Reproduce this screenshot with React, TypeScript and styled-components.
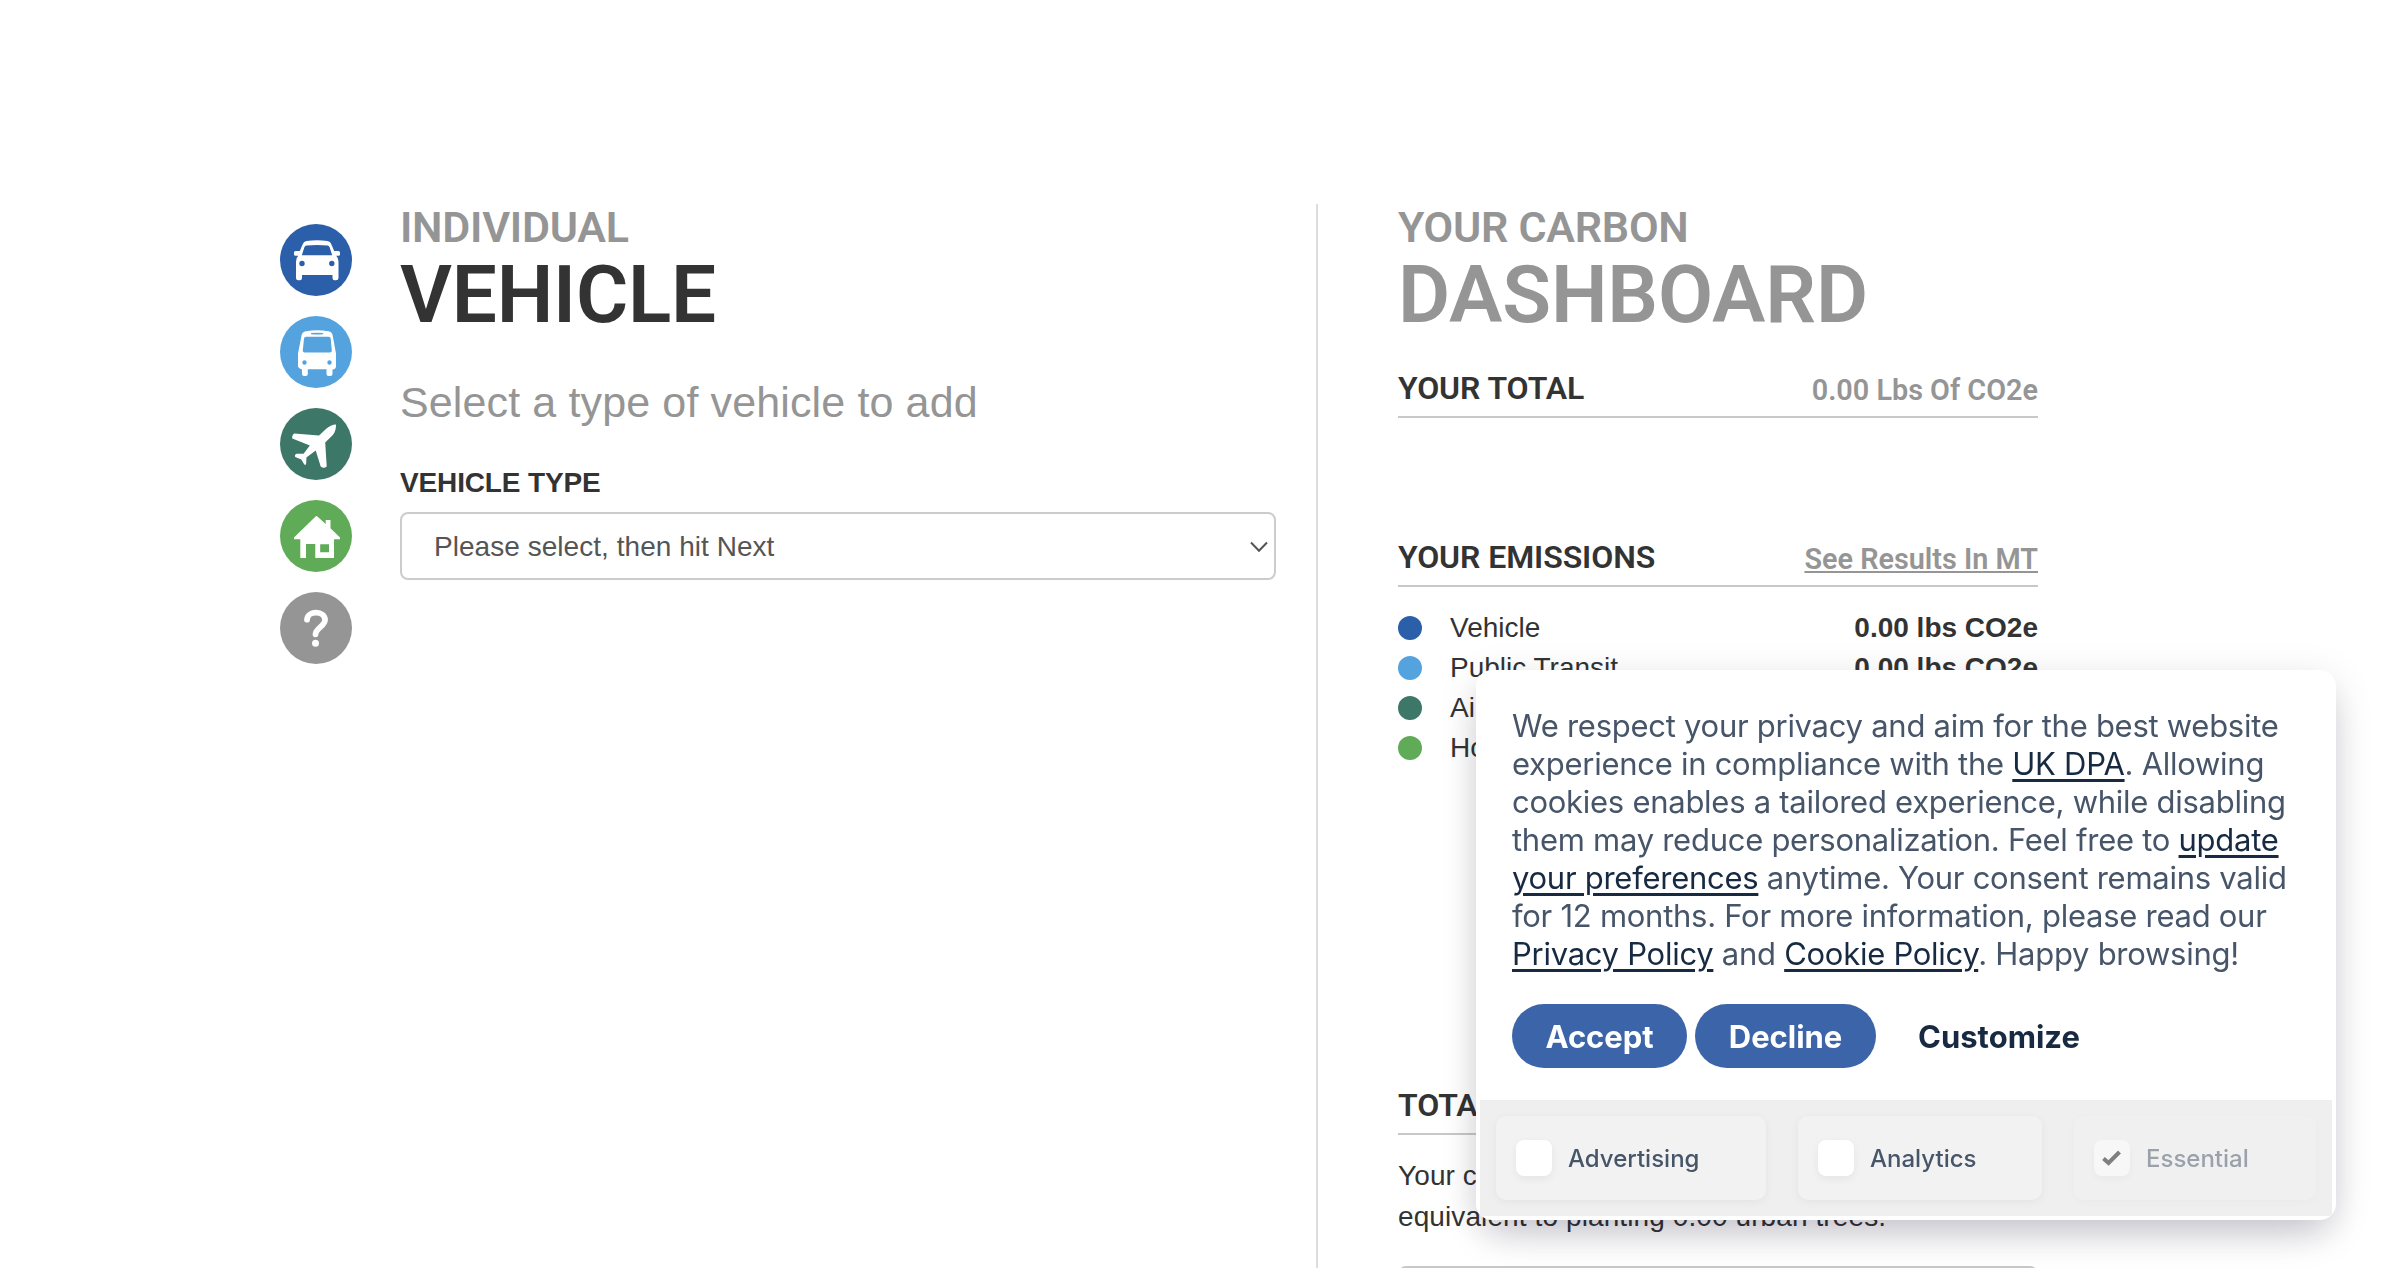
import React from "react";
import styled, { createGlobalStyle } from "styled-components";

const helvetica = `"Liberation Sans", Arial, sans-serif`;
const roboto = `Roboto, "Liberation Sans", sans-serif`;
const inter = `Inter, "Liberation Sans", sans-serif`;

const GlobalStyle = createGlobalStyle`
  * { box-sizing: border-box; }
  html, body { margin: 0; background: #fff; overflow: hidden; }
  h1, h2, h3, p, ul { margin: 0; padding: 0; }
`;

const Page = styled.div`
  display: flex;
  height: 1268px;
  padding: 204px 0 0 280px;
  overflow: hidden;
  color: #333;
  font-family: ${helvetica};
`;

const Steps = styled.nav`
  display: flex;
  flex-direction: column;
  gap: 20px;
  width: 120px;
  padding-top: 20px;
`;

const Step = styled.a<{ $color: string }>`
  display: block;
  width: 72px;
  height: 72px;
  border-radius: 50%;
  background: ${(p) => p.$color};

  svg {
    display: block;
    width: 72px;
    height: 72px;
  }
`;

const Main = styled.main`
  width: 916px;
  padding-right: 40px;
`;

const Dashboard = styled.aside`
  width: 722px;
  height: 1300px;
  padding-left: 80px;
  border-left: 2px solid #ddd;
`;

const Overline = styled.h2`
  color: #959595;
  font: 600 43px/46px ${roboto};
  letter-spacing: -0.25px;
`;

const Title = styled.h1<{ $muted?: boolean }>`
  height: 89px;
  color: ${(p) => (p.$muted ? "#959595" : "#333")};
  font: 600 80px/90px ${roboto};
  letter-spacing: -0.2px;
`;

const Prompt = styled.p`
  margin-top: 38px;
  color: #959595;
  font-size: 43px;
  line-height: 50px;
  letter-spacing: 0.13px;
`;

const FieldLabel = styled.label`
  display: block;
  margin-top: 35px;
  font-size: 28px;
  font-weight: 700;
  line-height: 41px;
  letter-spacing: -0.14px;
`;

const SelectBox = styled.div`
  display: flex;
  align-items: center;
  justify-content: space-between;
  height: 68px;
  margin-top: 9px;
  padding: 1px 6px 0 32px;
  border: 2px solid #ccc;
  border-radius: 8px;
  color: #555;
  font-size: 28px;
  letter-spacing: 0.04px;
`;

const SectionHead = styled.div<{ $top: number }>`
  display: flex;
  align-items: flex-start;
  justify-content: space-between;
  height: 50px;
  margin-top: ${(p) => p.$top}px;
  border-bottom: 2px solid #c8c8c8;
`;

const SectionTitle = styled.h3`
  font: 600 32px/40px ${roboto};
  letter-spacing: -0.08px;
`;

const SectionValue = styled.span`
  color: #959595;
  font: 600 28.8px/44px ${roboto};
`;

const SectionLink = styled(SectionValue).attrs({ as: "a" })`
  text-decoration: underline;
  text-decoration-thickness: 2px;
  text-underline-offset: 2px;
  text-decoration-skip-ink: none;
`;

const Emissions = styled.ul`
  height: 181px;
  padding-top: 21px;
  list-style: none;
`;

const Emission = styled.li`
  display: flex;
  align-items: center;
  height: 40px;
  font-size: 28px;
  line-height: 40px;

  b {
    margin-left: auto;
  }
`;

const Dot = styled.i<{ $color: string }>`
  width: 24px;
  height: 24px;
  margin-right: 28px;
  border-radius: 50%;
  background: ${(p) => p.$color};
`;

const Footprint = styled.p`
  margin-top: 20px;
  font-size: 28px;
  line-height: 41px;
  letter-spacing: 0.1px;
`;

const Card = styled.div`
  height: 120px;
  margin-top: 29px;
  border: 2px solid #c8c8c8;
  border-radius: 8px;
`;

const Consent = styled.section`
  position: fixed;
  right: 64px;
  bottom: 48px;
  width: 860px;
  height: 550px;
  padding: 37px 4px 4px;
  border-radius: 16px;
  background: #fff;
  box-shadow:
    0 20px 40px -10px rgba(20, 15, 50, 0.2),
    0 8px 40px rgba(20, 15, 50, 0.11);
  font-family: ${inter};
`;

const Notice = styled.p`
  padding-left: 32px;
  color: #475569;
  font-size: 31px;
  font-weight: 430;
  line-height: 38px;
  letter-spacing: -0.27px;
  white-space: nowrap;

  a {
    color: #172a41;
    text-decoration: underline;
    text-decoration-thickness: 3px;
    text-underline-offset: 4px;
  }
`;

const Actions = styled.div`
  display: flex;
  gap: 8px;
  margin: 31px 0 32px 32px;
`;

const Action = styled.button<{ $width: number; $plain?: boolean }>`
  width: ${(p) => p.$width}px;
  height: 64px;
  padding: 1px 0 0;
  border: 0;
  border-radius: 32px;
  background: ${(p) => (p.$plain ? "transparent" : "#3b65a8")};
  color: ${(p) => (p.$plain ? "#172a41" : "#fff")};
  font: 650 31px/63px ${inter};
  letter-spacing: ${(p) => (p.$plain ? "0" : "-0.05px")};
`;

const Categories = styled.div`
  display: flex;
  gap: 32px;
  height: 116px;
  padding: 16px;
  background: #efefef;
`;

const Category = styled.label<{ $width: number; $locked?: boolean }>`
  display: flex;
  align-items: center;
  gap: 16px;
  width: ${(p) => p.$width}px;
  height: 84px;
  padding: 0 20px;
  border-radius: 10px;
  background: #f2f2f2;
  box-shadow: 0 2px 10px rgba(0, 0, 0, 0.05);
  color: #475569;
  font-size: 24px;
  font-weight: 520;
  opacity: ${(p) => (p.$locked ? 0.5 : 1)};
`;

const Checkbox = styled.span`
  display: flex;
  align-items: center;
  justify-content: center;
  width: 36px;
  height: 36px;
  border-radius: 8px;
  background: #fff;
  box-shadow: 0 3px 8px rgba(0, 0, 0, 0.06);
`;

const CarIcon = () => (
  <svg viewBox="0 0 72 72" fill="#fff">
    <path
      fillRule="evenodd"
      d="M26.5 17Q37 15.3 47.5 17Q50.5 17.5 51.3 20.2L54.2 27H58.5Q60 27 60 28.6V30.4Q60 31.8 58.4 31.8H56.2Q58.5 34 58.5 37.5V54Q58.5 56.3 56 56.3H54.7Q52.5 56.3 52.5 54V51H22V54Q22 56.3 19.8 56.3H18.3Q16 56.3 16 54V37.5Q16 34 18.2 31.8H15.6Q14 31.8 14 30.4V28.6Q14 27 15.6 27H19.8L22.7 20.2Q23.7 17.5 26.5 17ZM26.4 21.5Q25 21.7 24.3 23.5L21.8 31.2H52.2L49.7 23.5Q49 21.7 47.5 21.5Q37 20.6 26.4 21.5ZM22 36.8A2.7 2.7 0 1 0 22 42.2A2.7 2.7 0 1 0 22 36.8ZM51.8 36.8A2.7 2.7 0 1 0 51.8 42.2A2.7 2.7 0 1 0 51.8 36.8Z"
    />
  </svg>
);

const BusIcon = () => (
  <svg viewBox="0 0 72 72" fill="#fff">
    <path
      fillRule="evenodd"
      d="M26 15.3Q37 13.2 48.5 15.3Q52.3 16 52.7 19.5L56 37.5V50Q56 53.2 52.5 53.5V58Q52.5 60 50.4 60H48.5Q46.5 60 46.5 58V53.3H27.8V58Q27.8 60 25.8 60H24Q22 60 22 58V53.5Q18 52 18 50V37.5L21.5 19.5Q22 16 26 15.3ZM26 20.7Q24.3 20.7 24 22.5L22.8 34.5Q22.7 36.6 24.7 36.6H50Q52 36.6 51.8 34.5L50.7 22.5Q50.5 20.7 48.7 20.7ZM31.4 17Q30.2 17.5 31.4 18.2Q37 18.9 42.8 18.2Q44 17.5 42.8 17Q37 16.4 31.4 17ZM24.5 44.3A2.2 2.2 0 1 0 24.5 48.7A2.2 2.2 0 1 0 24.5 44.3ZM49.5 44.3A2.2 2.2 0 1 0 49.5 48.7A2.2 2.2 0 1 0 49.5 44.3Z"
    />
  </svg>
);

const PlaneIcon = () => (
  <svg viewBox="0 0 72 72" fill="#fff">
    <path d="M56 16.4Q50.5 16.6 46.5 20.5L39 27.6L14.2 25.6Q11.6 27.5 12.3 30.4L29.8 37.6L23.6 45.8L16.6 45.8Q14.3 46.6 15.2 49L21.3 51.6L24.3 56.6Q26.2 57.5 26.2 55.3L26.4 49.6L35.7 42.5L40.7 58.6Q43.8 61.2 46.7 58.4L45.2 34.6L52.6 27.3Q56.4 22.5 56 16.4Z" />
  </svg>
);

const HouseIcon = () => (
  <svg viewBox="0 0 72 72" fill="#fff">
    <path
      fillRule="evenodd"
      d="M36.8 16L45.7 24V20H50.5V28.3L60 37.5V39.3H54V58H35.3V44H26V58H20.3V39.3H14V37.5L35.6 16.4Q36.2 15.7 36.8 16ZM40.2 44.3V52.3H49V44.3Z"
    />
  </svg>
);

const HelpIcon = () => (
  <svg viewBox="0 0 72 72" fill="none" stroke="#fff" strokeWidth="5.8" strokeLinecap="round">
    <path d="M27 27.7C27.6 18.2 45 18.4 45 28C45 34 35.6 36.2 35.5 42.3" />
    <circle cx="35.5" cy="51.2" r="3.5" fill="#fff" stroke="none" />
  </svg>
);

const steps = [
  { color: "#2c5fa9", icon: <CarIcon /> },
  { color: "#54a3df", icon: <BusIcon /> },
  { color: "#3d7768", icon: <PlaneIcon /> },
  { color: "#60ab57", icon: <HouseIcon /> },
  { color: "#959595", icon: <HelpIcon /> },
];

const emissions = [
  { name: "Vehicle", color: "#2c5fa9" },
  { name: "Public Transit", color: "#54a3df" },
  { name: "Air Travel", color: "#3d7768" },
  { name: "Home", color: "#60ab57" },
];

export default function App() {
  return (
    <>
      <GlobalStyle />
      <Page>
        <Steps>
          {steps.map((s) => (
            <Step key={s.color} $color={s.color}>
              {s.icon}
            </Step>
          ))}
        </Steps>

        <Main>
          <Overline>INDIVIDUAL</Overline>
          <Title>VEHICLE</Title>
          <Prompt>Select a type of vehicle to add</Prompt>
          <FieldLabel>VEHICLE TYPE</FieldLabel>
          <SelectBox>
            Please select, then hit Next
            <svg width="18" height="12" viewBox="0 0 18 12" fill="none" stroke="#555" strokeWidth="2">
              <path d="M1 1.5L9 9.8L17 1.5" />
            </svg>
          </SelectBox>
        </Main>

        <Dashboard>
          <Overline>YOUR CARBON</Overline>
          <Title $muted>DASHBOARD</Title>
          <SectionHead $top={29}>
            <SectionTitle>YOUR TOTAL</SectionTitle>
            <SectionValue>0.00 Lbs Of CO2e</SectionValue>
          </SectionHead>
          <SectionHead $top={119}>
            <SectionTitle>YOUR EMISSIONS</SectionTitle>
            <SectionLink>See Results In MT</SectionLink>
          </SectionHead>
          <Emissions>
            {emissions.map((e) => (
              <Emission key={e.name}>
                <Dot $color={e.color} />
                {e.name}
                <b>0.00 lbs CO2e</b>
              </Emission>
            ))}
          </Emissions>
          <SectionHead $top={317}>
            <SectionTitle>TOTAL</SectionTitle>
          </SectionHead>
          <Footprint>
            Your carbon footprint is
            <br />
            equivalent to planting 0.00 urban trees.
          </Footprint>
          <Card />
        </Dashboard>
      </Page>

      <Consent>
        <Notice>
          We respect your privacy and aim for the best website
          <br />
          experience in compliance with the <a>UK DPA</a>. Allowing
          <br />
          cookies enables a tailored experience, while disabling
          <br />
          them may reduce personalization. Feel free to <a>update</a>
          <br />
          <a>your preferences</a> anytime. Your consent remains valid
          <br />
          for 12 months. For more information, please read our
          <br />
          <a>Privacy Policy</a> and <a>Cookie Policy</a>. Happy browsing!
        </Notice>
        <Actions>
          <Action $width={175}>Accept</Action>
          <Action $width={181}>Decline</Action>
          <Action $width={230} $plain>
            Customize
          </Action>
        </Actions>
        <Categories>
          <Category $width={270}>
            <Checkbox />
            Advertising
          </Category>
          <Category $width={244}>
            <Checkbox />
            Analytics
          </Category>
          <Category $width={242} $locked>
            <Checkbox>
              <svg width="20" height="18" viewBox="0 0 20 18" fill="none" stroke="#111" strokeWidth="4">
                <path d="M1.5 9.5L6.5 14L17.5 3" />
              </svg>
            </Checkbox>
            Essential
          </Category>
        </Categories>
      </Consent>
    </>
  );
}
